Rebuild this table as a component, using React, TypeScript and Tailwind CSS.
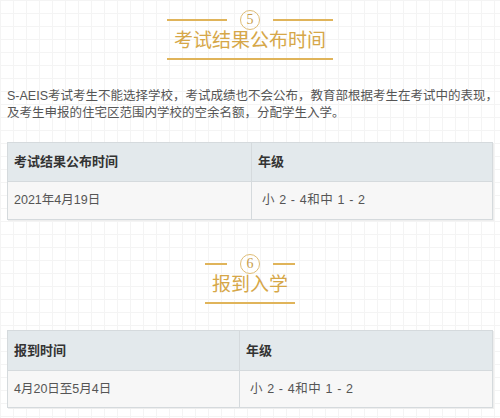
const GOLD = 'text-[#d6a748]'

function Heading({ num, title }: { num: string; title: string }) {
  return (
    <div className="flex justify-center">
      <div className="flex flex-col">
        <div className="flex items-center h-[20px]">
          <div className="flex-1 h-[2px] bg-[#e0b45a]" />
          <div className="mx-[13px] w-[20px] h-[20px] rounded-full border-[1.5px] border-[#dfbd76] flex items-center justify-center">
            <span className="font-['Liberation_Serif',serif] text-[14px] leading-none text-[#c99d4a]">
              {num}
            </span>
          </div>
          <div className="flex-1 h-[2px] bg-[#e0b45a]" />
        </div>
        <div className={`px-[7px] text-[19px] leading-[22px] text-center ${GOLD}`}>
          {title}
        </div>
        <div className="mt-[6px] h-[2px] bg-[#e0b45a]" />
      </div>
    </div>
  )
}

function InfoTable({
  head,
  row,
  firstCol,
  headH,
  bodyH,
}: {
  head: [string, string]
  row: [string, string]
  firstCol: string
  headH: string
  bodyH: string
}) {
  return (
    <div className="mx-[7px] border border-[#d5dadd] shadow-[1px_1px_0_#eeeeee]">
      <div className={`flex bg-[#e3e9ec] border-b border-[#d5dadd] ${headH}`}>
        <div className={`${firstCol} border-r border-[#d5dadd] px-[6px] flex items-center text-[13px] font-bold text-[#333]`}>
          {head[0]}
        </div>
        <div className="flex-1 px-[6px] flex items-center text-[13px] font-bold text-[#333]">
          {head[1]}
        </div>
      </div>
      <div className={`flex bg-[#f7f7f7] ${bodyH}`}>
        <div className={`${firstCol} border-r border-[#d5dadd] px-[6px] flex items-center text-[12.5px] text-[#555]`}>
          {row[0]}
        </div>
        <div className="flex-1 px-[6px] flex items-center text-[12.5px] text-[#555] whitespace-pre tracking-[0.6px]">
          {row[1]}
        </div>
      </div>
    </div>
  )
}

export default function App() {
  return (
    <div className="w-[500px] h-[418px] overflow-hidden bg-white bg-[linear-gradient(to_right,#f4f4f4_1px,transparent_1px),linear-gradient(to_bottom,#f4f4f4_1px,transparent_1px)] bg-[size:13px_13px] font-['Liberation_Sans','Noto_Sans_CJK_SC',sans-serif] pt-[10px]">
      {/* Section 5 */}
      <Heading num="5" title="考试结果公布时间" />

      <p className="mt-[28px] px-[7px] text-[12.5px] leading-[17px] text-[#555] whitespace-nowrap">
        S-AEIS考试考生不能选择学校，考试成绩也不会公布，教育部根据考生在考试中的表现，
        <br />
        及考生申报的住宅区范围内学校的空余名额，分配学生入学。
      </p>

      <div className="mt-[20px]">
        <InfoTable
          head={['考试结果公布时间', '年级']}
          row={['2021年4月19日', '\u00a0小 2 - 4和中 1 - 2']}
          firstCol="w-[244px]"
          headH="h-[39px]"
          bodyH="h-[37px]"
        />
      </div>

      {/* Section 6 */}
      <div className="mt-[34px]">
        <Heading num="6" title="报到入学" />
      </div>

      <div className="mt-[26px]">
        <InfoTable
          head={['报到时间', '年级']}
          row={['4月20日至5月4日', '\u00a0小 2 - 4和中 1 - 2']}
          firstCol="w-[232px]"
          headH="h-[40px]"
          bodyH="h-[36px]"
        />
      </div>
    </div>
  )
}
